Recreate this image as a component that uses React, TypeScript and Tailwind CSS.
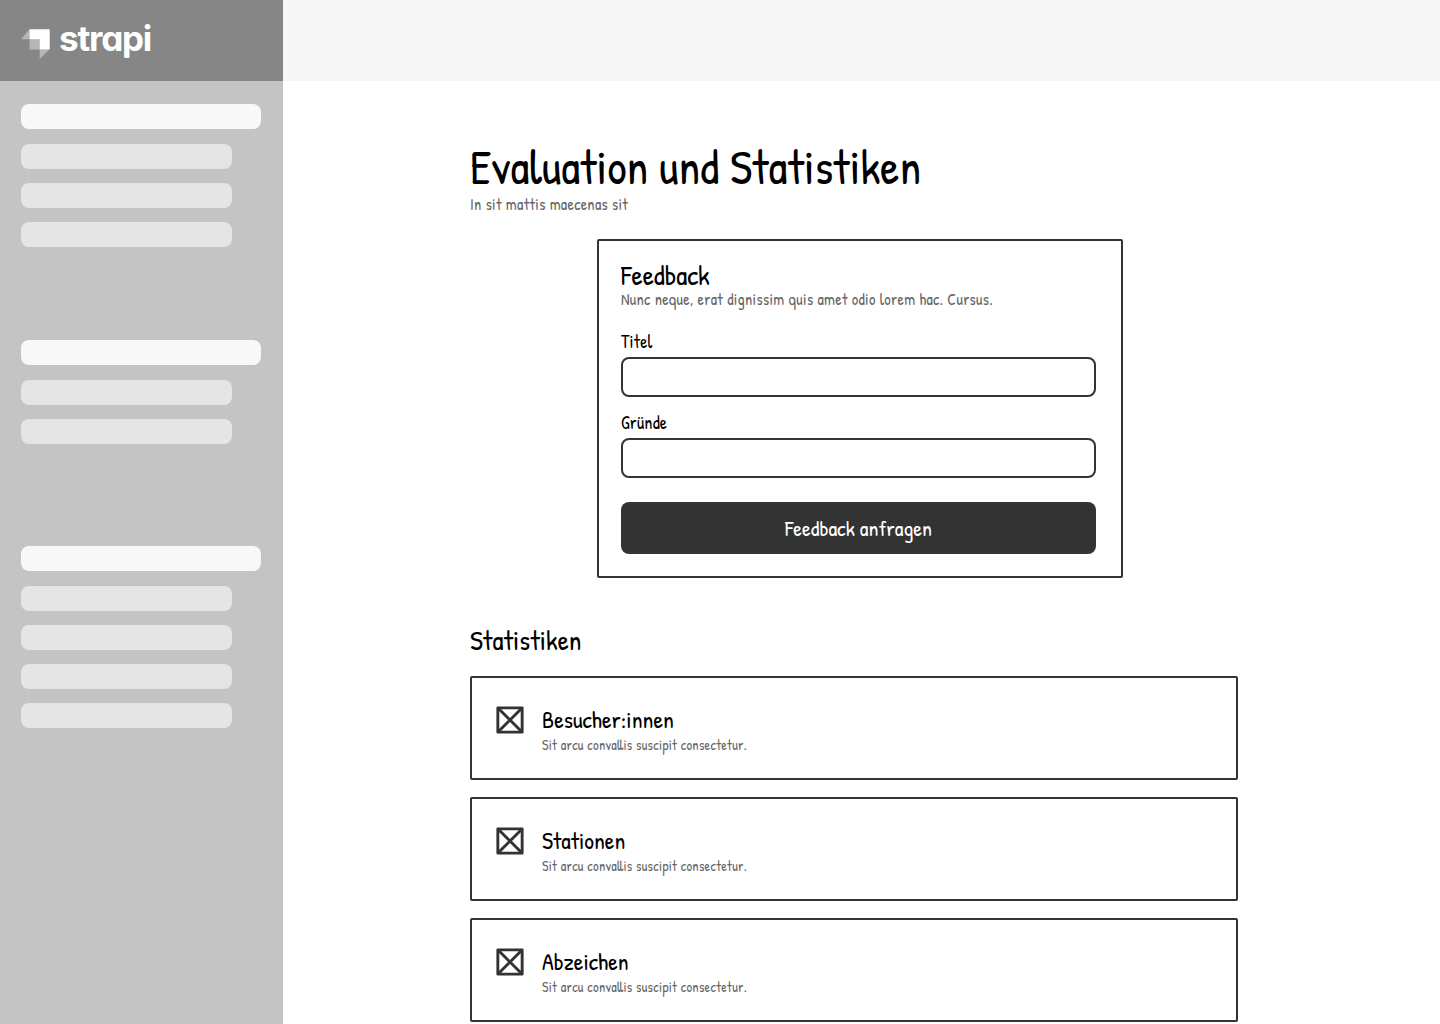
const navGroups = [
  { id: "first", items: 3, spacing: "mb-[93px]" },
  { id: "second", items: 2, spacing: "mb-[102px]" },
  { id: "third", items: 4, spacing: "" },
];

const stats = ["Besucher:innen", "Stationen", "Abzeichen"];

function Logo() {
  return (
    <div className="flex items-start">
      <svg width="30" height="30" viewBox="0 0 30 30" fill="#fff" className="mt-[11px] shrink-0">
        <path d="M8.500 .2h20.200v20.300h-10V10.200H8.500z" />
        <path opacity=".4" d="M8.500 10.200h10.200v10.300H8.500z" />
        <path opacity=".4" d="M8.500 .2v10H0z" />
        <path opacity=".4" d="M18.700 20.500h9.500l-9.500 9.500z" />
      </svg>
      <span className='ml-2 font-[Inter] text-[35px] leading-[40px] font-bold tracking-[-0.035em] text-white [font-feature-settings:"cv11"]'>
        strapi
      </span>
    </div>
  );
}

function Sidebar() {
  return (
    <aside className="w-[283px] shrink-0 bg-[#c4c4c4]">
      <div className="h-[81px] bg-[#868686] pt-[18px] pl-[21px]">
        <Logo />
      </div>
      <nav className="px-[21px] pt-[23px]">
        {navGroups.map((group) => (
          <div key={group.id} className={group.spacing}>
            <div className="mb-[15px] h-[25px] w-[240px] rounded-lg bg-[#f8f8f8]" />
            <div className="flex flex-col gap-3.5">
              {Array.from({ length: group.items }, (_, i) => (
                <div key={i} className="h-[25px] w-[211px] rounded-lg bg-[#e5e5e5]" />
              ))}
            </div>
          </div>
        ))}
      </nav>
    </aside>
  );
}

function Field({ id, label }: { id: string; label: string }) {
  return (
    <div>
      <label htmlFor={id} className="block text-[18px] leading-6 tracking-[0.01em]">
        {label}
      </label>
      <input id={id} className="mt-[3px] block h-10 w-full rounded-lg border-2 border-[#333] bg-white px-3 outline-none" />
    </div>
  );
}

function FeedbackCard() {
  return (
    <form className="mt-[25px] ml-[127px] h-[339px] w-[526px] rounded-xs border-2 border-[#333] pt-[18px] pr-[25px] pl-[22px]">
      <h2 className="text-[28px] leading-8">Feedback</h2>
      <p className='-mt-0.5 text-base leading-5 tracking-[0.02em] text-[#666] [font-feature-settings:"liga"]'>
        Nunc neque, erat dignissim quis amet odio lorem hac. Cursus.
      </p>
      <div className="mt-[21px] flex flex-col gap-3.5">
        <Field id="titel" label="Titel" />
        <Field id="gruende" label="Gründe" />
      </div>
      <button type="button" className="mt-6 block h-[52px] w-full rounded-lg bg-[#333] text-[22px] text-white">
        Feedback anfragen
      </button>
    </form>
  );
}

function CrossBox() {
  return (
    <svg width="28" height="28" viewBox="0 0 28 28" fill="none" stroke="#333" strokeWidth="2.900" strokeLinejoin="round" className="shrink-0">
      <rect x="1.850" y="1.850" width="24.300" height="24.300" />
      <path d="M2.500 2.500l23 23M25.500 2.500l-23 23" />
    </svg>
  );
}

function StatCard({ title }: { title: string }) {
  return (
    <li className="flex h-[104px] gap-[18px] rounded-xs border-2 border-[#333] pt-7 pl-6">
      <CrossBox />
      <div>
        <h3 className="text-2xl leading-[26px]">{title}</h3>
        <p className='mt-[3px] text-sm leading-5 tracking-[0.02em] text-[#666] [font-feature-settings:"liga"]'>
          Sit arcu convallis suscipit consectetur.
        </p>
      </div>
    </li>
  );
}

export default function App() {
  return (
    <div className="flex h-[1024px] w-full overflow-hidden bg-white font-['Patrick_Hand',cursive] text-black">
      <Sidebar />
      <div className="flex-1">
        <header className="h-[81px] bg-[#f6f6f6]" />
        <main className="ml-[187px] w-[768px] pt-[57px]">
          <h1 className="text-5xl leading-[57px]">Evaluation und Statistiken</h1>
          <p className='-mt-px text-base leading-5 tracking-[0.02em] text-[#666] [font-feature-settings:"liga"]'>
            In sit mattis maecenas sit
          </p>
          <FeedbackCard />
          <h2 className="mt-[46px] text-[28px] leading-8">Statistiken</h2>
          <ul className="mt-5 flex flex-col gap-[17px]">
            {stats.map((title) => (
              <StatCard key={title} title={title} />
            ))}
          </ul>
        </main>
      </div>
    </div>
  );
}
